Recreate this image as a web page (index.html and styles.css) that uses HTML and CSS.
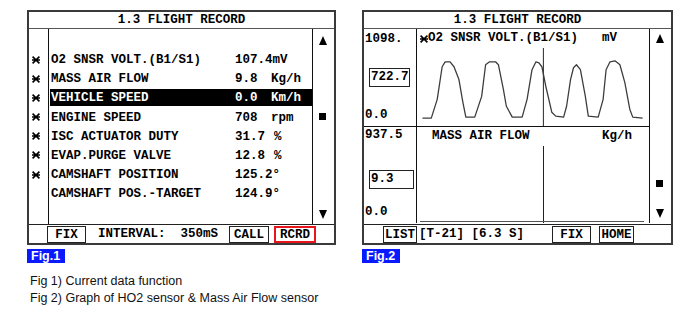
FILE: index.html
```html
<!DOCTYPE html>
<html lang="en">
<head>
    <meta charset="utf-8" />
    <title>Flight Record - Current Data</title>
    <link rel="stylesheet" href="styles.css">
</head>
<body>
    <div class="page">
        <div class="figures">
            <!-- Fig 1: current data list -->
            <div class="figure">
                <div class="screen">
                    <div class="title">1.3 FLIGHT RECORD</div>
                    <div class="list-body">
                        <div class="marks">
                            <div class="mark"><svg class="star" viewBox="0 0 7 7"><path d="M0.5 0.5L6.5 6.5M6.5 0.5L0.5 6.5M0 3.5H7"/></svg></div>
                            <div class="mark"><svg class="star" viewBox="0 0 7 7"><path d="M0.5 0.5L6.5 6.5M6.5 0.5L0.5 6.5M0 3.5H7"/></svg></div>
                            <div class="mark"><svg class="star" viewBox="0 0 7 7"><path d="M0.5 0.5L6.5 6.5M6.5 0.5L0.5 6.5M0 3.5H7"/></svg></div>
                            <div class="mark"><svg class="star" viewBox="0 0 7 7"><path d="M0.5 0.5L6.5 6.5M6.5 0.5L0.5 6.5M0 3.5H7"/></svg></div>
                            <div class="mark"><svg class="star" viewBox="0 0 7 7"><path d="M0.5 0.5L6.5 6.5M6.5 0.5L0.5 6.5M0 3.5H7"/></svg></div>
                            <div class="mark"><svg class="star" viewBox="0 0 7 7"><path d="M0.5 0.5L6.5 6.5M6.5 0.5L0.5 6.5M0 3.5H7"/></svg></div>
                            <div class="mark"><svg class="star" viewBox="0 0 7 7"><path d="M0.5 0.5L6.5 6.5M6.5 0.5L0.5 6.5M0 3.5H7"/></svg></div>
                            <div class="mark"></div>
                        </div>
                        <div class="rows">
                            <div class="row"><span>O2 SNSR VOLT.(B1/S1)</span><span class="wide">107.4mV</span></div>
                            <div class="row"><span>MASS AIR FLOW</span><span>9.8</span><span>Kg/h</span></div>
                            <div class="row selected"><span>VEHICLE SPEED</span><span>0.0</span><span>Km/h</span></div>
                            <div class="row"><span>ENGINE SPEED</span><span>708</span><span>rpm</span></div>
                            <div class="row"><span>ISC ACTUATOR DUTY</span><span>31.7</span><span class="pct">%</span></div>
                            <div class="row"><span>EVAP.PURGE VALVE</span><span>12.8</span><span class="pct">%</span></div>
                            <div class="row"><span>CAMSHAFT POSITION</span><span class="wide">125.2°</span></div>
                            <div class="row"><span>CAMSHAFT POS.-TARGET</span><span class="wide">124.9°</span></div>
                        </div>
                        <div class="scroll scroll-list">
                            <div class="arrow-up"></div>
                            <div class="thumb"></div>
                            <div class="arrow-down"></div>
                        </div>
                    </div>
                    <div class="toolbar toolbar-list">
                        <span class="key key-fix">FIX</span>
                        <span class="bar-text interval">INTERVAL:  350mS</span>
                        <span class="key key-call">CALL</span>
                        <span class="key key-rcrd">RCRD</span>
                    </div>
                </div>
                <div class="fig-tag">Fig.1</div>
            </div>

            <!-- Fig 2: graph view -->
            <div class="figure">
                <div class="screen">
                    <div class="title">1.3 FLIGHT RECORD</div>
                    <div class="graph-body">
                        <div class="scale scale-top">
                            <span>1098.</span>
                            <span class="scale-box box-o2">722.7</span>
                            <span class="scale-min">0.0</span>
                        </div>
                        <div class="graph graph-top">
                            <div class="graph-label">
                                <span class="graph-name"><svg class="star" viewBox="0 0 7 7"><path d="M0.5 0.5L6.5 6.5M6.5 0.5L0.5 6.5M0 3.5H7"/></svg>O2 SNSR VOLT.(B1/S1)</span>
                                <span>mV</span>
                            </div>
                            <svg class="plot" viewBox="0 0 233 80">
                                <line class="cursor" x1="126.5" y1="1" x2="126.5" y2="80"/>
                                <polyline class="trace" points="4,72 13,72 19,53 24,20 27,15 32,15 36,20 41,33 45,56 48,71 57,71 64,50 68,18 72,15 78,15 81,18 86,43 89,60 95,71 105,71 110,53 115,23 119,15 122,16 125,20 129,40 135,66 139,70 147,71 150,60 154,33 157,21 160,18 164,23 169,50 172,70 182,71 187,53 190,23 194,15 199,14 204,18 209,36 214,63 217,71 227,72"/>
                            </svg>
                        </div>
                        <div class="scroll scroll-graph">
                            <div class="arrow-up"></div>
                            <div class="thumb"></div>
                            <div class="arrow-down"></div>
                        </div>
                        <div class="scale scale-bottom">
                            <span>937.5</span>
                            <span class="scale-box box-maf">9.3</span>
                            <span class="scale-min">0.0</span>
                        </div>
                        <div class="graph graph-bottom">
                            <div class="graph-label">
                                <span class="graph-name maf-name">MASS AIR FLOW</span>
                                <span>Kg/h</span>
                            </div>
                            <svg class="plot" viewBox="0 0 233 78">
                                <line class="cursor" x1="126.5" y1="1" x2="126.5" y2="78"/>
                                <line class="baseline" x1="3" y1="76.5" x2="227" y2="76.5"/>
                            </svg>
                        </div>
                    </div>
                    <div class="toolbar toolbar-graph">
                        <span class="key key-list">LIST</span>
                        <span class="bar-text">[T-21] [6.3 S]</span>
                        <span class="key key-fix2">FIX</span>
                        <span class="key key-home">HOME</span>
                    </div>
                </div>
                <div class="fig-tag">Fig.2</div>
            </div>
        </div>

        <div class="caption">
            <div>Fig 1) Current data function</div>
            <div>Fig 2) Graph of HO2 sensor &amp; Mass Air Flow sensor</div>
        </div>
    </div>
</body>
</html>
```

FILE: styles.css
```css
body {
    margin: 0;
    padding: 0;
    background-color: #fff;
    color: #000;
}

.page {
    padding: 10px 0 0 27px;
}

.figures {
    display: flex;
    gap: 26px;
}

/* ---------- scan tool screen ---------- */

.screen {
    box-sizing: border-box;
    width: 309px;
    height: 235px;
    border: 2px solid #3a3a3a;
    display: flex;
    flex-direction: column;
    font-family: "Liberation Mono", "DejaVu Sans Mono", monospace;
    font-weight: bold;
    font-size: 12.5px;
    line-height: 17px;
    white-space: pre;
}

.figure:last-child .screen {
    width: 311px;
}

.title {
    height: 16px;
    line-height: 17px;
    text-align: center;
    border-bottom: 1px solid #555;
}

.star {
    width: 8px;
    height: 8px;
    stroke: #000;
    stroke-width: 1.4;
    fill: none;
}

/* list view */

.list-body {
    height: 195px;
    display: grid;
    grid-template-columns: 20px 264px 19px;
    border-bottom: 1px solid #222;
}

.marks {
    border-right: 1px solid #111;
    padding-top: 22px;
    display: flex;
    flex-direction: column;
    gap: 2.2px;
}

.mark {
    height: 17px;
    display: flex;
    align-items: center;
    padding-left: 3px;
}

.rows {
    border-right: 1px solid #111;
    padding-top: 22px;
    display: flex;
    flex-direction: column;
    gap: 2.2px;
}

.row {
    height: 17px;
    line-height: 18px;
    margin-left: 1px;
    padding-left: 1px;
    display: grid;
    grid-template-columns: 184px 36px 1fr;
}

.row .wide {
    grid-column: 2 / 4;
}

.row .pct {
    padding-left: 3px;
}

.row.selected {
    background-color: #000;
    color: #fff;
}

.scroll {
    display: flex;
    flex-direction: column;
    align-items: center;
}

.scroll-list {
    padding-top: 7px;
}

.scroll-list .thumb {
    margin-top: 68px;
}

.scroll-list .arrow-down {
    margin-top: 90px;
}

.arrow-up {
    width: 0;
    height: 0;
    border-left: 4px solid transparent;
    border-right: 4px solid transparent;
    border-bottom: 9px solid #000;
}

.arrow-down {
    width: 0;
    height: 0;
    border-left: 4px solid transparent;
    border-right: 4px solid transparent;
    border-top: 9px solid #000;
}

.thumb {
    width: 7px;
    height: 7px;
    background-color: #000;
}

/* bottom key bar */

.toolbar {
    height: 18px;
    display: flex;
    align-items: stretch;
}

.key {
    box-sizing: border-box;
    border: 1px solid #222;
    text-align: center;
    line-height: 16px;
    margin-top: 1px;
}

.bar-text {
    line-height: 19px;
}

.key-fix {
    margin-left: 18px;
    width: 39px;
}

.interval {
    margin-left: 12px;
}

.key-call {
    margin-left: 11px;
    width: 40px;
}

.key-rcrd {
    margin-left: 5px;
    width: 42px;
    border: 2px solid #e8141c;
    line-height: 14px;
}

.key-list {
    margin-left: 19px;
    width: 34px;
    margin-right: 2px;
}

.key-fix2 {
    margin-left: 28px;
    width: 39px;
}

.key-home {
    margin-left: 8px;
    width: 35px;
}

/* graph view */

.graph-body {
    height: 195px;
    display: grid;
    grid-template-columns: 53px 233px 19px;
    grid-template-rows: 98px 96px;
    border-bottom: 1px solid #222;
}

.scale {
    border-right: 1px solid #111;
    display: flex;
    flex-direction: column;
    align-items: flex-start;
    padding-left: 1px;
}

.scale-top {
    border-bottom: 1px solid #111;
    padding-top: 2px;
    padding-bottom: 2px;
}

.scale-bottom {
    padding-bottom: 2px;
}

.scale-box {
    box-sizing: border-box;
    border: 1px solid #222;
    height: 19px;
    padding-left: 1px;
    margin-left: 4px;
}

.box-o2 {
    width: 41px;
    margin-top: 20px;
}

.box-maf {
    width: 45px;
    margin-top: 26px;
}

.scale-min {
    margin-top: auto;
}

.graph {
    border-right: 1px solid #111;
    display: flex;
    flex-direction: column;
}

.graph-top {
    border-bottom: 1px solid #111;
}

.graph-label {
    height: 18px;
    line-height: 19px;
    padding-left: 3px;
    display: grid;
    grid-template-columns: 182px 1fr;
}

.graph-name {
    display: flex;
    align-items: center;
}

.maf-name {
    padding-left: 12px;
}

.plot {
    display: block;
    width: 233px;
    flex: 1;
}

.cursor {
    stroke: #222;
    stroke-width: 1;
}

.trace {
    fill: none;
    stroke: #3c3c3c;
    stroke-width: 1.3;
    stroke-linejoin: round;
}

.baseline {
    stroke: #555;
    stroke-width: 1;
}

.scroll-graph {
    grid-row: 1 / 3;
    grid-column: 3;
    padding-top: 5px;
}

.scroll-graph .thumb {
    margin-top: 137px;
}

.scroll-graph .arrow-down {
    margin-top: 22px;
}

/* labels under screens */

.fig-tag {
    display: inline-block;
    margin-top: 4px;
    height: 14px;
    line-height: 15px;
    padding: 0 5px 0 4px;
    background-color: #0a1aff;
    color: #fff;
    font-family: "Liberation Sans", Arial, sans-serif;
    font-weight: bold;
    font-size: 12.5px;
}

.caption {
    margin-top: 9px;
    padding-left: 3px;
    font-family: "Liberation Sans", Arial, sans-serif;
    font-size: 12.5px;
    line-height: 17px;
    color: #111;
}
```
